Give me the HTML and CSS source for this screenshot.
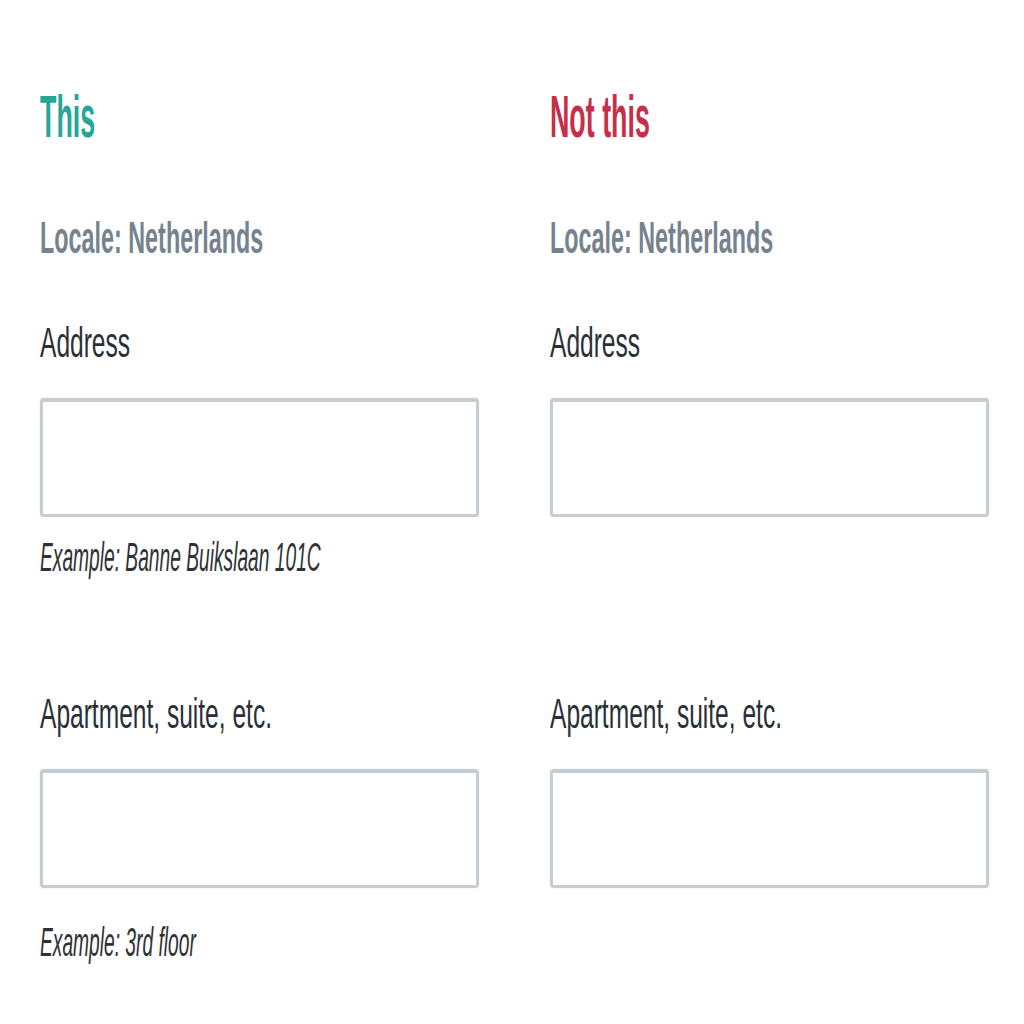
FILE: index.html
```html
<!DOCTYPE html>
<html lang="en">
<head>
<meta charset="utf-8">
<title>This / Not this</title>
<link rel="stylesheet" href="styles.css">
</head>
<body>
<main class="compare">
  <section class="column">
    <h2 class="verdict verdict-good"><span class="squeeze squeeze-title">This</span></h2>
    <p class="locale"><span class="squeeze squeeze-locale">Locale: Netherlands</span></p>
    <div class="field">
      <label class="label"><span class="squeeze squeeze-label">Address</span></label>
      <div class="input"></div>
      <p class="hint"><span class="squeeze squeeze-hint">Example: Banne Buikslaan 101C</span></p>
    </div>
    <div class="field">
      <label class="label"><span class="squeeze squeeze-label">Apartment, suite, etc.</span></label>
      <div class="input"></div>
      <p class="hint hint-loose"><span class="squeeze squeeze-hint">Example: 3rd floor</span></p>
    </div>
  </section>
  <section class="column">
    <h2 class="verdict verdict-bad"><span class="squeeze squeeze-title">Not this</span></h2>
    <p class="locale"><span class="squeeze squeeze-locale">Locale: Netherlands</span></p>
    <div class="field">
      <label class="label"><span class="squeeze squeeze-label">Address</span></label>
      <div class="input"></div>
    </div>
    <div class="field">
      <label class="label"><span class="squeeze squeeze-label">Apartment, suite, etc.</span></label>
      <div class="input"></div>
    </div>
  </section>
</main>
</body>
</html>
```

FILE: styles.css
```css
html, body {
  margin: 0;
  padding: 0;
  background: #ffffff;
}

body {
  font-family: "Liberation Sans", Arial, sans-serif;
  width: 1024px;
  height: 1024px;
  overflow: hidden;
}

.compare {
  display: flex;
  gap: 71px;
  padding: 87px 0 0 40px;
}

.column {
  width: 439px;
  display: flex;
  flex-direction: column;
}

.squeeze {
  display: inline-block;
  white-space: nowrap;
  transform-origin: left center;
}

.squeeze-title { transform: scaleX(0.447); }
.squeeze-locale { transform: scaleX(0.519); }
.squeeze-label { transform: scaleX(0.571); }
.squeeze-hint { transform: scaleX(0.48); }

.verdict {
  margin: 0;
  font-size: 60px;
  line-height: 60px;
  height: 60px;
  font-weight: 700;
}

.verdict-good { color: #27a596; }
.verdict-bad { color: #c52f49; }

.locale {
  margin: 68px 0 0;
  font-size: 45px;
  line-height: 45px;
  height: 45px;
  font-weight: 700;
  color: #76838e;
}

.field {
  display: flex;
  flex-direction: column;
  margin-top: 61px;
  min-height: 256px;
}

.field + .field {
  margin-top: 115px;
}

.label {
  display: block;
  font-size: 43px;
  line-height: 43px;
  height: 43px;
  color: #2a3136;
}

.input {
  margin-top: 34px;
  box-sizing: border-box;
  height: 119px;
  border: 3px solid #c7ccd0;
  border-top-width: 4px;
  border-radius: 4px;
  background: #ffffff;
  box-shadow: 0 0 2px rgba(200, 205, 210, 0.5);
}

.hint {
  margin: 20px 0 0;
  font-size: 40px;
  line-height: 40px;
  height: 40px;
  font-style: italic;
  color: #2f3234;
}

.hint-loose {
  margin-top: 34px;
}
```
